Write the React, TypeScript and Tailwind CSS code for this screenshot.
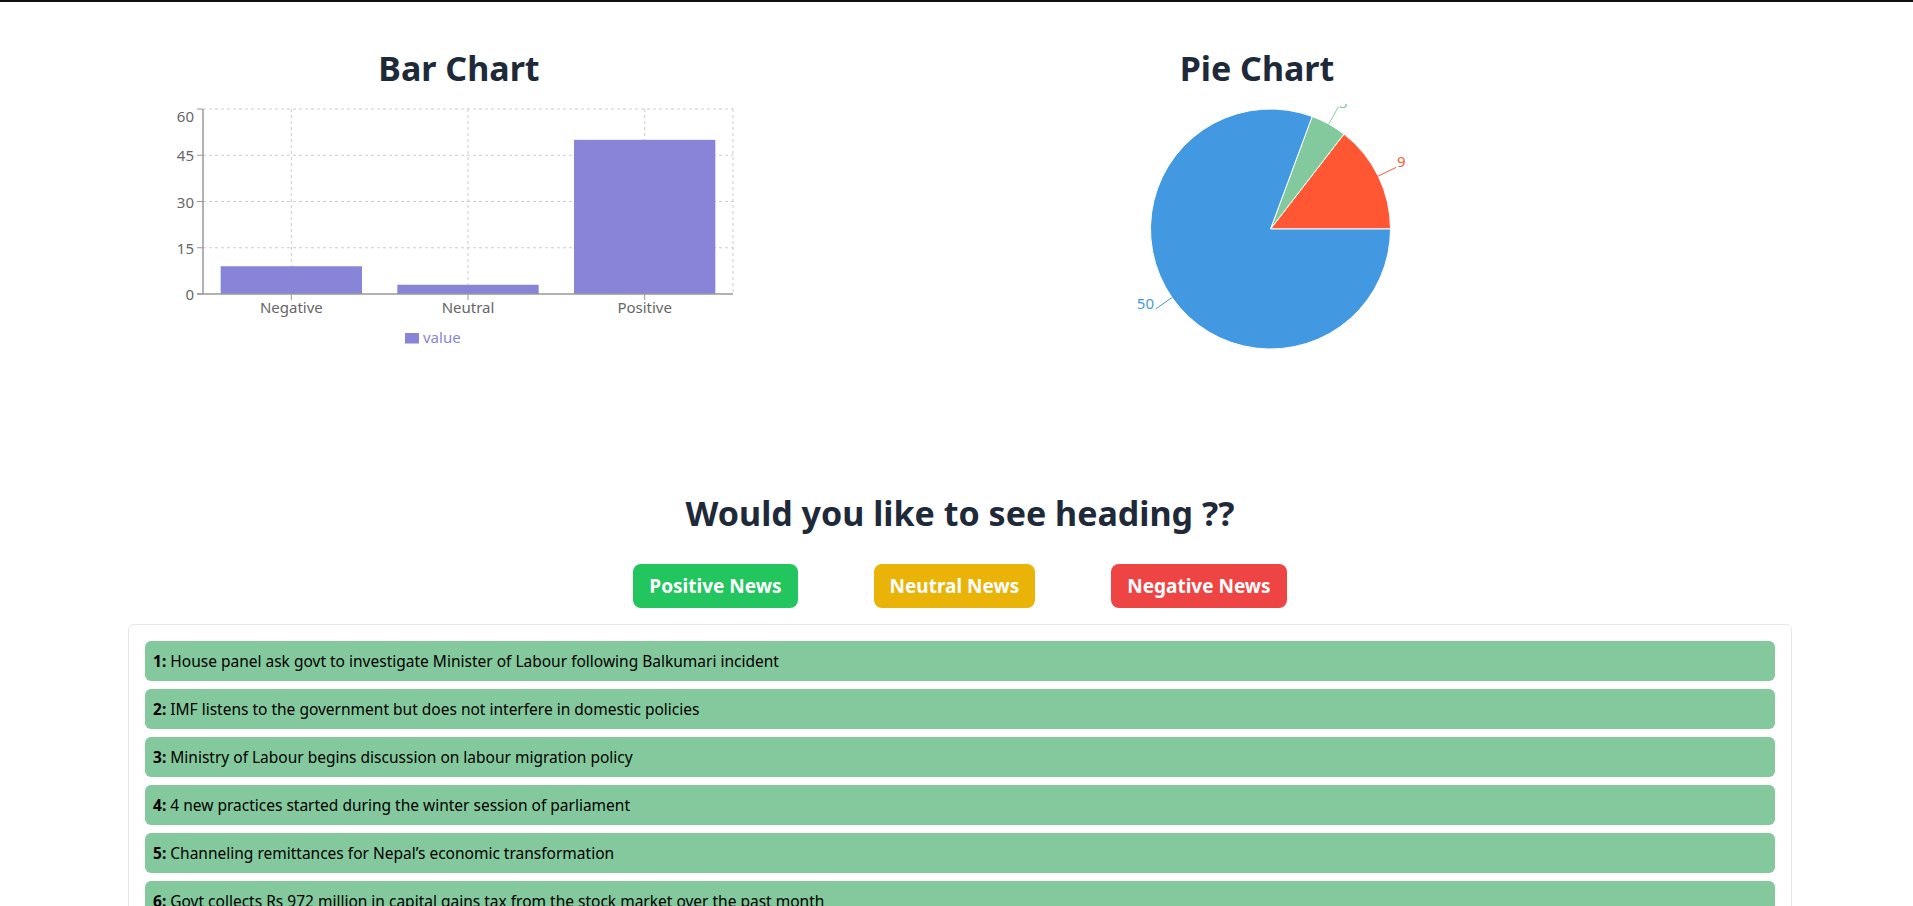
const barData = [
  { name: "Negative", value: 9 },
  { name: "Neutral", value: 3 },
  { name: "Positive", value: 50 },
];

const pieData = [
  { name: "Negative", value: 9, color: "#ff5733" },
  { name: "Neutral", value: 3, color: "#82ca9d" },
  { name: "Positive", value: 50, color: "#4299e1" },
];

const news = [
  "House panel ask govt to investigate Minister of Labour following Balkumari incident",
  "IMF listens to the government but does not interfere in domestic policies",
  "Ministry of Labour begins discussion on labour migration policy",
  "4 new practices started during the winter session of parliament",
  "Channeling remittances for Nepal’s economic transformation",
  "Govt collects Rs 972 million in capital gains tax from the stock market over the past month",
];

// plot area inside the bar chart svg
const PX0 = 64;
const PX1 = 594;
const PY0 = 5;
const PY1 = 190;
const MAX = 60;

function yOf(v: number) {
  return PY1 - (v / MAX) * (PY1 - PY0);
}

function BarChartSvg() {
  const band = (PX1 - PX0) / barData.length;
  const ticks = [0, 15, 30, 45, 60];
  return (
    <svg width={640} height={250} className="block" style={{ fontFamily: "'Noto Sans', sans-serif" }}>
      {ticks.slice(1).map((t) => (
        <line key={t} x1={PX0} x2={PX1} y1={yOf(t)} y2={yOf(t)} stroke="#ccc" strokeDasharray="3 3" />
      ))}
      {barData.map((_, i) => (
        <line key={i} x1={PX0 + band * (i + 0.5)} x2={PX0 + band * (i + 0.5)} y1={PY0} y2={PY1} stroke="#ccc" strokeDasharray="3 3" />
      ))}
      <line x1={PX1} x2={PX1} y1={PY0} y2={PY1} stroke="#ccc" strokeDasharray="3 3" />

      {barData.map((d, i) => (
        <rect
          key={d.name}
          x={PX0 + band * i + band * 0.1}
          y={yOf(d.value)}
          width={band * 0.8}
          height={PY1 - yOf(d.value)}
          fill="#8884d8"
        />
      ))}

      {/* y axis */}
      <line x1={PX0} x2={PX0} y1={PY0} y2={PY1} stroke="#999" strokeWidth={1.5} />
      {ticks.map((t) => (
        <g key={t}>
          <line x1={PX0 - 6} x2={PX0} y1={yOf(t)} y2={yOf(t)} stroke="#999" />
          <text
            x={55}
            y={t === 60 ? yOf(t) + 7 : yOf(t)}
            textAnchor="end"
            dominantBaseline="central"
            fontSize={15}
            fill="#666"
          >
            {t}
          </text>
        </g>
      ))}

      {/* x axis */}
      <line x1={PX0 - 6} x2={PX1} y1={PY1} y2={PY1} stroke="#999" strokeWidth={1.5} />
      {barData.map((d, i) => {
        const cx = PX0 + band * (i + 0.5);
        return (
          <g key={d.name}>
            <line x1={cx} x2={cx} y1={PY1} y2={PY1 + 6} stroke="#999" />
            <text x={cx} y={209} textAnchor="middle" fontSize={15} fill="#666">
              {d.name}
            </text>
          </g>
        );
      })}

      {/* legend */}
      <rect x={266} y={229} width={14} height={10.5} fill="#8884d8" />
      <text x={284} y={239} fontSize={15} fill="#8884d8">
        value
      </text>
    </svg>
  );
}

function PieChartSvg() {
  const cx = 213.5;
  const cy = 125;
  const r = 120;
  const total = pieData.reduce((s, d) => s + d.value, 0);
  let start = 0;
  const slices = pieData.map((d) => {
    const sweep = (d.value / total) * 360;
    const a0 = start;
    const a1 = start + sweep;
    start = a1;
    const rad = (a: number) => (a * Math.PI) / 180;
    const p = (a: number, rr: number) => [cx + rr * Math.cos(rad(a)), cy - rr * Math.sin(rad(a))];
    const [x0, y0] = p(a0, r);
    const [x1, y1] = p(a1, r);
    const mid = (a0 + a1) / 2;
    const [lx0, ly0] = p(mid, r);
    const [lx1, ly1] = p(mid, r + 20);
    return {
      ...d,
      path: `M${cx},${cy} L${x0},${y0} A${r},${r} 0 ${sweep > 180 ? 1 : 0} 0 ${x1},${y1} Z`,
      line: [lx0, ly0, lx1, ly1],
    };
  });
  const labels = [
    { x: 340, y: 63, anchor: "start" as const },
    { x: 282, y: 4, anchor: "start" as const },
    { x: 97, y: 205, anchor: "end" as const },
  ];
  return (
    <svg width={400} height={250} className="block" style={{ fontFamily: "'Noto Sans', sans-serif" }}>
      {slices.map((s) => (
        <path key={s.name} d={s.path} fill={s.color} stroke="#fff" strokeWidth={1} />
      ))}
      {slices.map((s, i) => (
        <g key={s.name}>
          <line x1={s.line[0]} y1={s.line[1]} x2={s.line[2]} y2={s.line[3]} stroke={s.color} />
          <text x={labels[i].x} y={labels[i].y} textAnchor={labels[i].anchor} fontSize={15} fill={s.color}>
            {s.value}
          </text>
        </g>
      ))}
    </svg>
  );
}

export default function App() {
  return (
    <div className="min-h-screen border-t-2 border-[#111] bg-white font-['Noto_Sans',sans-serif] text-gray-800">
      <div className="flex gap-[278px] pl-[139px] pt-[46px]">
        <div className="flex w-[640px] flex-col items-center">
          <h2 className="text-[34px] leading-10 font-bold">Bar Chart</h2>
          <div className="mt-4 self-stretch">
            <BarChartSvg />
          </div>
        </div>
        <div className="flex w-[400px] flex-col items-center">
          <h2 className="text-[34px] leading-10 font-bold">Pie Chart</h2>
          <div className="mt-4 self-stretch">
            <PieChartSvg />
          </div>
        </div>
      </div>

      <div className="mt-[139px] flex flex-col items-center pl-[7px]">
        <h1 className="text-[34px] leading-10 font-bold">Would you like to see heading ??</h1>
        <div className="mt-[31px] flex gap-[76px]">
          <button className="rounded-lg bg-[#22c55e] px-4 py-2 text-[19px] leading-7 font-bold text-white">Positive News</button>
          <button className="rounded-lg bg-[#eab308] px-4 py-2 text-[19px] leading-7 font-bold text-white">Neutral News</button>
          <button className="rounded-lg bg-[#ef4444] px-4 py-2 text-[19px] leading-7 font-bold text-white">Negative News</button>
        </div>
      </div>

      <div className="mt-4 ml-[128px] mr-[121px] rounded-md border border-gray-200 p-4">
        <div className="flex flex-col gap-2">
          {news.map((title, i) => (
            <div key={i} className="rounded-md bg-[#84c99d] px-2 py-2 text-[15.5px] leading-6 text-black">
              <span className="font-bold">{i + 1}:</span> {title}
            </div>
          ))}
        </div>
      </div>
    </div>
  );
}
